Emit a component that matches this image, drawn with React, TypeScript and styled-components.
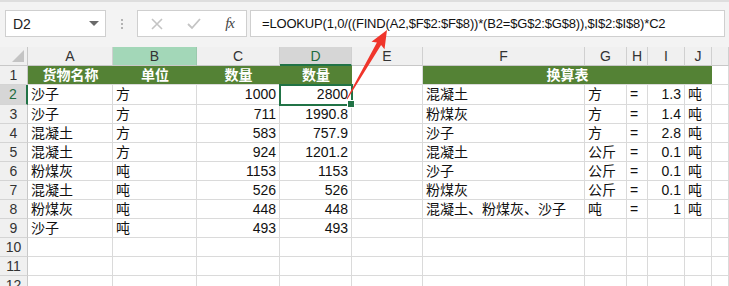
import React from "react";
import styled, { createGlobalStyle } from "styled-components";

const GlobalStyle = createGlobalStyle`
  html, body { margin: 0; padding: 0; background: #ffffff; }
  body { font-family: "Liberation Sans", "Noto Sans CJK SC", sans-serif; }
  * { box-sizing: border-box; }
`;

const COLS = [28, 85, 84, 83, 72, 71, 162, 42, 21, 37, 27, 17];
const LETTERS = ["A", "B", "C", "D", "E", "F", "G", "H", "I", "J", ""];

const Page = styled.div`
  position: relative;
  width: 729px;
  height: 286px;
  overflow: hidden;
  background: #ffffff;
  font-family: "Liberation Sans", "Noto Sans CJK SC", sans-serif;
`;

const Toolbar = styled.div`
  height: 47px;
  background: #f3f3f3;
  border-top: 2px solid #dedede;
  display: flex;
  align-items: flex-start;
  padding: 8px 4px 0 5px;
`;

const Box = styled.div`
  height: 27px;
  background: #ffffff;
  border: 1px solid #cfcfcf;
  display: flex;
  align-items: center;
`;

const NameBox = styled(Box)`
  width: 101px;
  padding: 0 6px 0 7px;
  justify-content: space-between;
  font-size: 14px;
  color: #222;
`;

const Caret = styled.span`
  width: 0;
  height: 0;
  border-left: 5px solid transparent;
  border-right: 5px solid transparent;
  border-top: 5px solid #6a6a6a;
`;

const Dots = styled.div`
  width: 31px;
  height: 27px;
  display: flex;
  flex-direction: column;
  align-items: center;
  justify-content: center;
  gap: 2px;
  & > span {
    width: 2px;
    height: 2px;
    background: #b3b3b3;
  }
`;

const ButtonBox = styled(Box)`
  width: 110px;
  padding: 0 12px 0 13px;
  justify-content: space-between;
  margin-right: 3px;
`;

const Fx = styled.span`
  font-family: "Liberation Serif", serif;
  font-style: italic;
  font-size: 15px;
  color: #444;
  letter-spacing: -1px;
`;

const FormulaBox = styled(Box)`
  flex: 1;
  padding-left: 11px;
  font-size: 13px;
  letter-spacing: -0.18px;
  color: #111;
  white-space: nowrap;
`;

const Grid = styled.div`
  display: grid;
  grid-template-columns: ${COLS.map((c) => c + "px").join(" ")};
  grid-auto-rows: 19px;
  grid-template-rows: 19px 19px 20px;
`;

const Cell = styled.div<{ $align?: "left" | "right" | "center" }>`
  position: relative;
  border-right: 1px solid #dadada;
  border-bottom: 1px solid #dadada;
  font-size: 14px;
  line-height: 18px;
  color: #111;
  padding: 0 3px;
  white-space: nowrap;
  overflow: visible;
  text-align: ${(p) => p.$align || "left"};
`;

const Corner = styled.div`
  position: relative;
  background: #f0f0f0;
  border-right: 1px solid #c8c8c8;
  border-bottom: 1px solid #c8c8c8;
  &::after {
    content: "";
    position: absolute;
    right: 3px;
    bottom: 3px;
    width: 0;
    height: 0;
    border-left: 12px solid transparent;
    border-bottom: 12px solid #c4c4c4;
  }
`;

const ColHead = styled.div<{ $state?: "sel" | "hl" }>`
  background: ${(p) => (p.$state === "sel" ? "#d6d6d6" : p.$state === "hl" ? "#a3d7b8" : "#f0f0f0")};
  border-right: 1px solid ${(p) => (p.$state === "hl" ? "#9bc9ad" : "#d0d0d0")};
  border-bottom: ${(p) => (p.$state === "sel" ? "2px solid #217346" : "1px solid #c8c8c8")};
  color: ${(p) => (p.$state === "sel" ? "#1e6b3f" : "#333")};
  font-size: 14px;
  line-height: 19px;
  text-align: center;
`;

const RowHead = styled.div<{ $sel?: boolean }>`
  background: ${(p) => (p.$sel ? "#d6d6d6" : "#f0f0f0")};
  border-right: ${(p) => (p.$sel ? "2px solid #217346" : "1px solid #c8c8c8")};
  border-bottom: 1px solid #d4d4d4;
  color: ${(p) => (p.$sel ? "#1e6b3f" : "#333")};
  font-size: 14px;
  line-height: 19px;
  text-align: center;
`;

const GreenCell = styled.div<{ $span?: number }>`
  grid-column: span ${(p) => p.$span || 1};
  background: #548235;
  border-bottom: 1px solid #dadada;
  color: #ffffff;
  font-weight: bold;
  font-size: 14px;
  line-height: 18px;
  text-align: center;
`;

const ActiveCell = styled(Cell)`
  outline: 2px solid #217346;
  outline-offset: -1px;
  z-index: 1;
  &::after {
    content: "";
    position: absolute;
    right: -4px;
    bottom: -4px;
    width: 6px;
    height: 6px;
    background: #217346;
    border: 1px solid #ffffff;
  }
`;

const Overlay = styled.svg`
  position: absolute;
  left: 0;
  top: 0;
  pointer-events: none;
  z-index: 5;
`;

const data: string[][] = [
  ["沙子", "方", "1000", "2800"],
  ["沙子", "方", "711", "1990.8"],
  ["混凝土", "方", "583", "757.9"],
  ["混凝土", "方", "924", "1201.2"],
  ["粉煤灰", "吨", "1153", "1153"],
  ["混凝土", "吨", "526", "526"],
  ["粉煤灰", "吨", "448", "448"],
  ["沙子", "吨", "493", "493"],
];

const conv: string[][] = [
  ["混凝土", "方", "=", "1.3", "吨"],
  ["粉煤灰", "方", "=", "1.4", "吨"],
  ["沙子", "方", "=", "2.8", "吨"],
  ["混凝土", "公斤", "=", "0.1", "吨"],
  ["沙子", "公斤", "=", "0.1", "吨"],
  ["粉煤灰", "公斤", "=", "0.1", "吨"],
  ["混凝土、粉煤灰、沙子", "吨", "=", "1", "吨"],
];

function Arrow() {
  const tail = { x: 347, y: 99 };
  const tip = { x: 387, y: 30 };
  const dx = tip.x - tail.x;
  const dy = tip.y - tail.y;
  const len = Math.hypot(dx, dy);
  const ux = dx / len;
  const uy = dy / len;
  const px = -uy;
  const py = ux;
  const headLen = 18;
  const headW = 7.5;
  const bx = tip.x - ux * headLen;
  const by = tip.y - uy * headLen;
  const shaftW = 2.4;
  const pts = [
    [tail.x + px * 0.5, tail.y + py * 0.5],
    [bx + ux * 2 + px * shaftW, by + uy * 2 + py * shaftW],
    [bx + px * headW, by + py * headW],
    [tip.x, tip.y],
    [bx - px * headW, by - py * headW],
    [bx + ux * 2 - px * shaftW, by + uy * 2 - py * shaftW],
    [tail.x - px * 0.5, tail.y - py * 0.5],
  ]
    .map((p) => p.map((v) => v.toFixed(1)).join(","))
    .join(" ");
  return (
    <Overlay width={729} height={286} viewBox="0 0 729 286">
      <polygon points={pts} fill="#f0352b" />
    </Overlay>
  );
}

export default function App() {
  const rows: React.ReactNode[] = [];
  for (let r = 2; r <= 12; r++) {
    const d = data[r - 2];
    const c = conv[r - 2];
    rows.push(<RowHead key={`rh${r}`} $sel={r === 2}>{r}</RowHead>);
    rows.push(<Cell key={`a${r}`}>{d ? d[0] : ""}</Cell>);
    rows.push(<Cell key={`b${r}`}>{d ? d[1] : ""}</Cell>);
    rows.push(<Cell key={`c${r}`} $align="right">{d ? d[2] : ""}</Cell>);
    if (r === 2) {
      rows.push(<ActiveCell key={`d${r}`} $align="right">{d[3]}</ActiveCell>);
    } else {
      rows.push(<Cell key={`d${r}`} $align="right">{d ? d[3] : ""}</Cell>);
    }
    rows.push(<Cell key={`e${r}`} />);
    rows.push(<Cell key={`f${r}`}>{c ? c[0] : ""}</Cell>);
    rows.push(<Cell key={`g${r}`}>{c ? c[1] : ""}</Cell>);
    rows.push(<Cell key={`h${r}`}>{c ? c[2] : ""}</Cell>);
    rows.push(<Cell key={`i${r}`} $align="right">{c ? c[3] : ""}</Cell>);
    rows.push(<Cell key={`j${r}`}>{c ? c[4] : ""}</Cell>);
    rows.push(<Cell key={`k${r}`} />);
  }

  return (
    <Page>
      <GlobalStyle />
      <Toolbar>
        <NameBox>
          <span>D2</span>
          <Caret />
        </NameBox>
        <Dots>
          <span />
          <span />
          <span />
        </Dots>
        <ButtonBox>
          <svg width="12" height="12" viewBox="0 0 12 12">
            <path d="M1 1 L11 11 M11 1 L1 11" stroke="#c4c4c4" strokeWidth="1.6" />
          </svg>
          <svg width="14" height="12" viewBox="0 0 14 12">
            <path d="M1 6 L5 10 L13 1" stroke="#c4c4c4" strokeWidth="1.8" fill="none" />
          </svg>
          <Fx>fx</Fx>
        </ButtonBox>
        <FormulaBox>=LOOKUP(1,0/((FIND(A2,$F$2:$F$8))*(B2=$G$2:$G$8)),$I$2:$I$8)*C2</FormulaBox>
      </Toolbar>
      <Grid>
        <Corner />
        {LETTERS.map((l, i) => (
          <ColHead key={`ch${i}`} $state={l === "D" ? "sel" : l === "B" ? "hl" : undefined}>
            {l}
          </ColHead>
        ))}
        <RowHead>1</RowHead>
        <GreenCell>货物名称</GreenCell>
        <GreenCell>单位</GreenCell>
        <GreenCell>数量</GreenCell>
        <GreenCell>数量</GreenCell>
        <Cell />
        <GreenCell $span={5}>换算表</GreenCell>
        <Cell />
        {rows}
      </Grid>
      <Arrow />
    </Page>
  );
}
